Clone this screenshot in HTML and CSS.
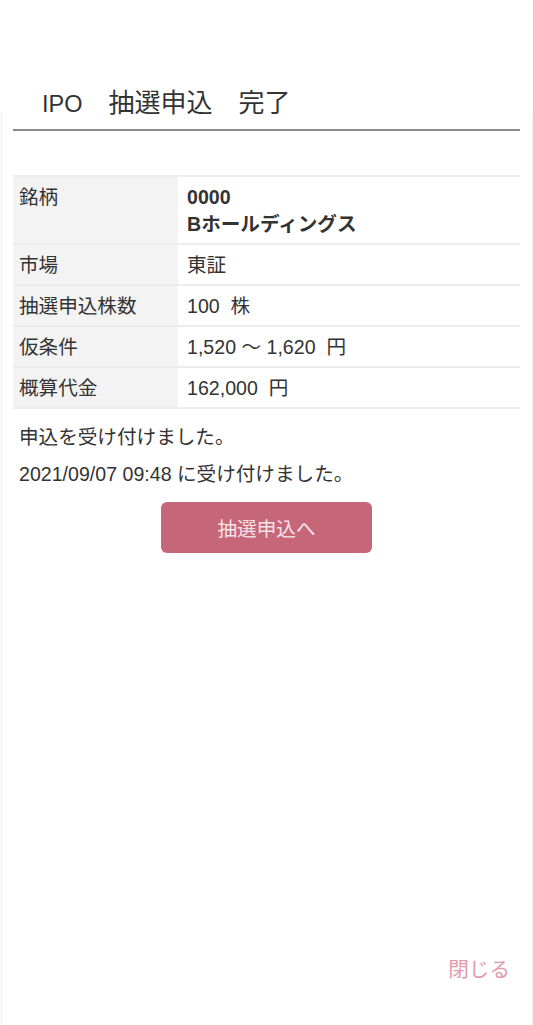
FILE: index.html
```html
<!DOCTYPE html>
<html lang="ja">

<head>
  <meta charset="UTF-8">
  <title>IPO 抽選申込 完了</title>
  <link rel="stylesheet" href="styles.css">
</head>

<body>
  <div class="header">
    <h1 class="title"><span class="title-en">IPO</span>　抽選申込　完了</h1>
  </div>

  <div class="panel">
    <div class="rule"></div>

    <table class="detail">
      <tr>
        <th>銘柄</th>
        <td class="brand">0000<br>Bホールディングス</td>
      </tr>
      <tr>
        <th>市場</th>
        <td>東証</td>
      </tr>
      <tr>
        <th>抽選申込株数</th>
        <td>100&nbsp; 株</td>
      </tr>
      <tr>
        <th>仮条件</th>
        <td>1,520 ～ 1,620&nbsp; 円</td>
      </tr>
      <tr>
        <th>概算代金</th>
        <td>162,000&nbsp; 円</td>
      </tr>
    </table>

    <p class="message">申込を受け付けました。</p>
    <p class="message second">2021/09/07 09:48 に受け付けました。</p>

    <div class="actions">
      <button type="button" class="btn-apply">抽選申込へ</button>
    </div>

    <div class="footer">
      <a href="#" class="close">閉じる</a>
    </div>
  </div>
</body>

</html>
```

FILE: styles.css
```css
body {
  font-family: 'Liberation Sans', 'Noto Sans CJK JP', sans-serif;
  background: #ffffff;
  color: #333;
  margin: 0;
  font-size: 19.6px;
  line-height: 28px;
}

.header {
  height: 113px;
  box-sizing: border-box;
  padding: 89px 0 0 42px;
}

.title {
  margin: 0;
  font-size: 26px;
  font-weight: normal;
  line-height: 28px;
  color: #333;
}

.title-en {
  font-size: 23.5px;
}

.panel {
  margin-left: 1px;
  border-left: 1px solid #f1f1f1;
  border-right: 1px solid #f1f1f1;
  min-height: 912px;
  box-sizing: border-box;
  padding: 0 12px 0 11px;
  display: flex;
  flex-direction: column;
}

.rule {
  margin-top: 16px;
  height: 2px;
  background: #8a8a8a;
}

.detail {
  margin-top: 44px;
  width: 100%;
  border-collapse: collapse;
}

.detail tr {
  border-top: 2px solid #ececec;
  border-bottom: 2px solid #ececec;
}

.detail th {
  width: 165px;
  box-sizing: border-box;
  background: #f3f3f3;
  font-weight: normal;
  text-align: left;
  vertical-align: top;
  padding: 7px 6px 5px 6px;
  line-height: 27px;
}

.detail td {
  padding: 7px 8px 5px 9px;
  line-height: 27px;
  vertical-align: top;
}

.detail td.brand {
  font-weight: bold;
}

.message {
  margin: 14px 0 0;
  padding-left: 6px;
}

.message.second {
  margin-top: 9px;
}

.actions {
  margin-top: 14px;
  display: flex;
  justify-content: center;
}

.btn-apply {
  width: 211px;
  height: 51px;
  border: none;
  border-radius: 6px;
  background: #c56679;
  color: #f6e3e8;
  font-family: inherit;
  font-size: 19.6px;
  padding: 0;
  cursor: pointer;
}

.footer {
  margin-top: auto;
  padding: 0 10px 41px 0;
  text-align: right;
}

.close {
  font-size: 20.6px;
  line-height: 28px;
  color: #e39aae;
  text-decoration: none;
}
```
